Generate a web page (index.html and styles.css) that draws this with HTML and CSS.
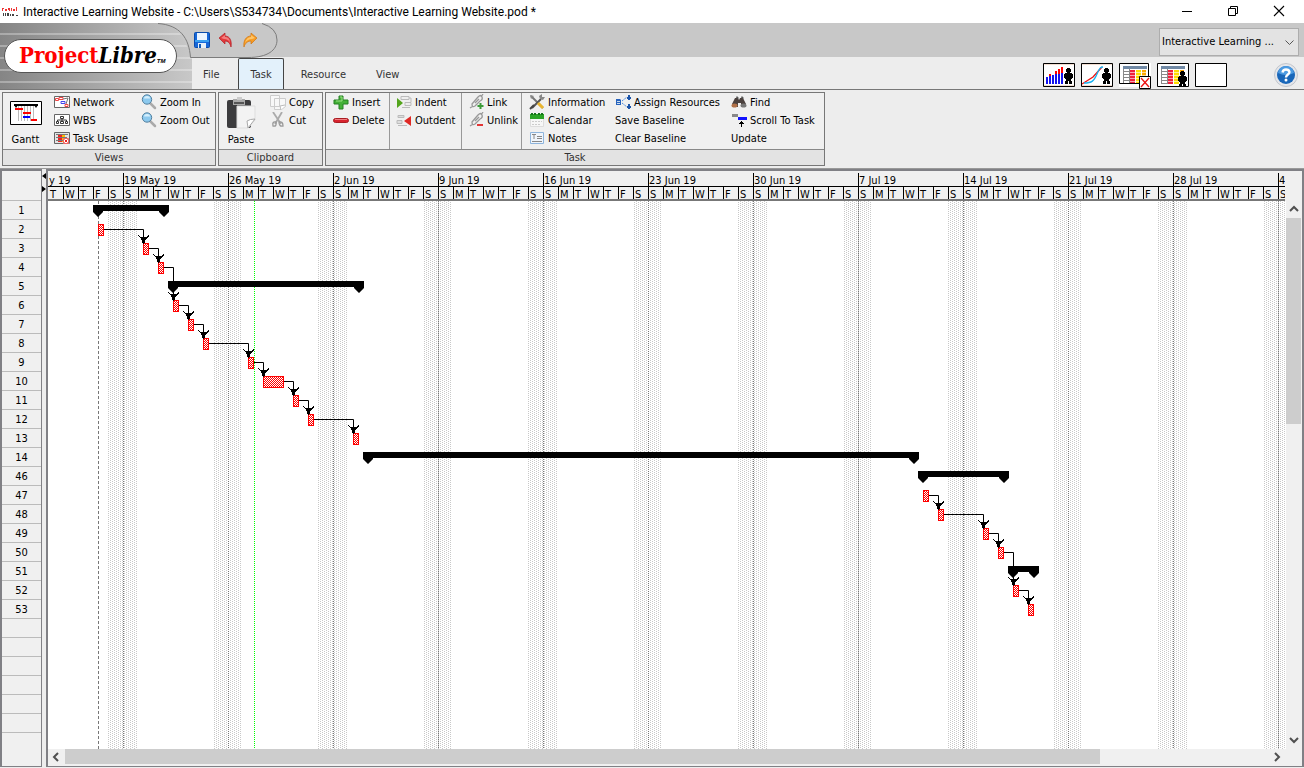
FILE: index.html
```html
<!DOCTYPE html>
<html lang="en">
<head>
<meta charset="utf-8">
<title>Interactive Learning Website - ProjectLibre</title>
<link rel="stylesheet" href="styles.css">
</head>
<body>
<header class="titlebar">
  <svg class="app-icon" width="16" height="10" viewBox="0 0 16 10"><path d="M0 1h2v1h-1v2h-1zM3 2h2v2h-2zM6 1h2v3h-1v-1h-1zM9 1h1v3h-1zM11 2h2v2h-2zM14 0h1v4h-1z" fill="#e33"/><path d="M1 6h1v3h-1zM3 6h1v3h-1zM5 6h2v3h-2zM8 7h1v2h-1zM10 7h2v2h-2zM14 8h2v1h-2z" fill="#444"/></svg>
  <span class="window-title">Interactive Learning Website - C:\Users\S534734\Documents\Interactive Learning Website.pod *</span>
  <div class="window-controls">
    <button type="button" aria-label="Minimize"><svg width="12" height="12"><path d="M1 6.500h10" stroke="#000"/></svg></button>
    <button type="button" aria-label="Restore"><svg width="12" height="12" fill="none" stroke="#000"><path d="M1.500 3.500h7v7h-7zM3.500 3.500v-2h7v7h-2"/></svg></button>
    <button type="button" aria-label="Close"><svg width="12" height="12"><path d="M1 1l10 10M11 1L1 11" stroke="#000" stroke-width="1.100"/></svg></button>
  </div>
</header>

<section class="banner">
  <div class="brand"><div class="logo"><span class="logo-red">Project</span><i>Libre</i><small>TM</small></div></div>
  <div class="banner-main">
    <div class="quickbar">
      <svg class="swoosh" width="124" height="35" viewBox="0 0 124 35"><path d="M0 0H4Q30 2 36 34.500H94C116 34.500 124 24 124 14Q123 4 108 0" fill="#c8c8c8"/><path d="M4 .5C26 2 35 15 36.500 34.500H94C114 34.500 123 27 123 17Q123 5 108 .5" fill="none" stroke="#7c7c7c"/></svg>
      <div class="quick-actions">
        <button type="button" aria-label="Save"><svg width="16" height="16"><rect x=".5" y=".5" width="15" height="15" rx="1" fill="#1767d8" stroke="#0a4cab"/><path d="M3 1h10v7H3z" fill="#eaf4ff"/><path d="M1 8h14v2H1z" fill="#38a0f0"/><path d="M4 11h8v5H4z" fill="#e8f1f8"/><path d="M5 12h2v4H5z" fill="#125bb7"/></svg></button>
        <button type="button" aria-label="Undo"><svg width="16" height="16"><path d="M1 6L7 1v3c5 0 7 5 6 11-1-4-3-6-6-6v3z" fill="#e2383b" stroke="#b12025" stroke-width=".7"/><path d="M3 6l4-3v2c3 0 5 2 5 6-1-3-3-4-6-4z" fill="#f47e7e"/></svg></button>
        <button type="button" aria-label="Redo"><svg width="16" height="16"><path d="M15 6L9 1v3C4 4 1 9 2 15c1-4 4-6 7-6v3z" fill="#f79c24" stroke="#ce7412" stroke-width=".7"/><path d="M13 6L9 3v2C6 5 4 7 3 11c2-3 4-4 7-4z" fill="#ffc567"/></svg></button>
      </div>
      <label class="project-picker"><select aria-label="Open project"><option>Interactive Learning ...</option></select><svg width="9" height="6"><path d="M.5.5l4 4 4-4" fill="none" stroke="#555"/></svg></label>
    </div>
    <div class="tabrow">
      <nav class="tabs"><button type="button">File</button><button type="button" class="active">Task</button><button type="button">Resource</button><button type="button">View</button></nav>
      <div class="view-buttons">
        <button type="button" aria-label="Histogram"><svg width="32" height="24"><path d="M0 0h32v2H0zM0 22h32v2H0z" fill="#f1ddd0"/><path d="M3 14h2v7H3zM6 12h2v9H6zM9 12h2v9H9zM12 10h2v11h-2zM15 10h2v11h-2zM18 10h2v11h-2z" fill="#1414f0"/><path d="M6 11h2v2H6zM12 8h2v3h-2zM15 6h2v5h-2zM18 4h2v6h-2z" fill="#f00"/><use href="#person" x="21" y="5"/><path d="M.5.5h31v23H.5z" fill="none" stroke="#000"/></svg></button>
        <button type="button" aria-label="Charts"><svg width="32" height="24"><path d="M0 0h32v2H0zM0 22h32v2H0z" fill="#f1ddd0"/><path d="M1 21L12 14 21 4" fill="none" stroke="#e11" stroke-width="1.300"/><path d="M3 20c8 0 10-2 13-9s4-7 6-7" fill="none" stroke="#16b1f0" stroke-width="1.300"/><use href="#person" x="21" y="5"/><path d="M.5.5h31v23H.5z" fill="none" stroke="#000"/></svg></button>
        <button type="button" aria-label="Task usage"><svg width="34" height="27"><use href="#sheet"/><path d="M.5.5h29v20H.5z" fill="none" stroke="#000"/><path d="M20.500 13.500h11v12h-11z" fill="#fff" stroke="#000"/><path d="M22 15l8 9M30 15l-8 9" stroke="#e11" stroke-width="1.300"/></svg></button>
        <button type="button" aria-label="Resource usage"><svg width="32" height="24"><use href="#sheet"/><use href="#person" x="21" y="8"/><path d="M.5.5h31v23H.5z" fill="none" stroke="#000"/></svg></button>
        <button type="button" aria-label="No sub-view"><svg width="32" height="24"><path d="M.5.5h31v23H.5z" fill="#fff" stroke="#000"/></svg></button>
        <button type="button" class="help" aria-label="Help"><svg width="24" height="24"><circle cx="12" cy="12" r="11.500" fill="#e4e6ea" stroke="#c3c6cc"/><circle cx="12" cy="12" r="9" fill="#1866b9"/><path d="M4 10a8 7 0 0 1 16 0Q12 14 4 10z" fill="#4c9be2"/><path d="M8.500 9.500Q9 6.500 12 6.500t3.500 2.500c0 2.500-3.500 2.500-3.500 5.500" fill="none" stroke="#fff" stroke-width="2.400"/><circle cx="12" cy="17" r="1.500" fill="#fff"/></svg></button>
      </div>
    </div>
  </div>
</section>

<svg class="defs" width="0" height="0" aria-hidden="true"><defs>
  <g id="person"><path d="M3 0h3v1h1v3h-1v1h2v1h1v4h-1v1h-1v2h1v3h-3v-3h-1v3h-3v-3h1v-2h-1v-1h-1v-4h1v-1h2v-1h-1v-3h1z"/></g>
  <g id="sheet"><path d="M4 3h24v18H4z" fill="#fff"/><path d="M4.500 6v14.500M10.500 6v15M4 8.500h6M4 11.500h6M4 14.500h6M4 17.500h6M4 20.500h6" stroke="#888"/><path d="M4 3h24v3H4z" fill="#7089a5"/><path d="M11 7h5v14h-5z" fill="#f0203c"/><path d="M17 7h5v14h-5z" fill="#fd0"/><path d="M23 7h4v14h-4z" fill="#ffa800"/><path d="M11 9.500h16M11 12.500h16M11 15.500h16M11 18.500h16" stroke="#fff" stroke-opacity=".6"/></g>
  <g id="lens"><path d="M9 9l5 5" stroke="#aaa" stroke-width="2.500" stroke-linecap="round"/><circle cx="6" cy="5.500" r="4.700" fill="#8cc9ee" stroke="#527f9e"/><path d="M3 4.500a3 2.500 0 0 1 6 0z" fill="#d5effc"/></g>
  <g id="chain" fill="none" stroke="#999" stroke-width="1.300"><path d="M3 10l6-7q3-3 4 0T11 7L6 12q-3 2-3-2zM6 9l4-4M1 14l3-2M12 3l2-3"/></g>
</defs></svg>

<section class="ribbon">
  <div class="group views">
    <div class="group-body">
      <button type="button" class="big"><svg width="32" height="24"><path d="M.5.500h31v23H.5z" fill="#fff" stroke="#000"/><path d="M8.500 5v15M11.500 5v15M14.500 5v15M17.500 5v15M20.500 5v15M23.500 5v15" stroke="#bbb"/><path d="M4 3h24v2H4z"/><path d="M4 4h4l-2 3zM24 4h4l-2 3z"/><path d="M5 7h8v2H5zM13 11h8v2h-8zM21 18h6v2h-6z" fill="#f00"/><path d="M13 15h7v2h-7z" fill="#00f"/></svg><span>Gantt</span></button>
      <div class="col">
        <button type="button"><svg width="16" height="16"><path d="M.5 2.500h15v11H.5z" fill="#fff" stroke="#666"/><path d="M1.500 4.500h3v2h-3zM5 3.500h4v2H5zM11 10.500h3v2h-3z" fill="#fff" stroke="#e44"/><path d="M7 7.500h4v2H7z" fill="#fff" stroke="#44e"/><path d="M9 5l5-1-2 6" fill="none" stroke="#777"/></svg>Network</button>
        <button type="button"><svg width="16" height="16"><path d="M.5 2.500h15v11H.5z" fill="#fff" stroke="#666"/><path d="M6.500 4.500h3v2h-3zM2.500 9.500h2v2h-2zM6.500 9.500h3v2h-3zM11.500 9.500h2v2h-2zM8 7v2M3.500 9V8h9v1" fill="none" stroke="#333"/></svg>WBS</button>
        <button type="button"><svg width="16" height="16"><path d="M.5 2.500h15v11H.5z" fill="#e4e4e4" stroke="#666"/><path d="M2 4h12v1H2z" fill="#777"/><path d="M4 5h4v7H4z" fill="#e22"/><path d="M8 5h3v7H8z" fill="#fb0"/><path d="M2 7.500h11M2 10.500h7" stroke="#777"/><path d="M9.500 8.500h5v5h-5z" fill="#fff" stroke="#e66"/><path d="M10.500 9.500l3 3m0-3l-3 3" stroke="#e22"/></svg>Task Usage</button>
      </div>
      <div class="col">
        <button type="button"><svg width="16" height="16"><use href="#lens"/></svg>Zoom In</button>
        <button type="button"><svg width="16" height="16"><use href="#lens"/></svg>Zoom Out</button>
      </div>
    </div>
    <h2>Views</h2>
  </div>
  <div class="group clipboard">
    <div class="group-body">
      <button type="button" class="big"><svg width="30" height="33"><rect x="1" y="3" width="24" height="28" rx="2" fill="#3c3c3e"/><path d="M7 2h12v6H7z" fill="#aaa"/><path d="M11 0h5v3h-5z" fill="#ccc"/><path d="M8 5h10v2H8z" fill="#555"/><path d="M11 9h18v14l-7 8H11z" fill="#f3f3f3" stroke="#ddd"/><path d="M29 22q-5 0-8 2l1 7z" fill="#fff" stroke="#aaa"/></svg><span>Paste</span></button>
      <div class="col">
        <button type="button"><svg width="16" height="16"><path d="M.5 1.500h9v11h-9zM4.500 4.500h11v8l-4 3h-7z" fill="#f8f8f8" stroke="#ccc"/><path d="M15 11l-5 1 1 4" fill="#fff" stroke="#bbb"/></svg>Copy</button>
        <button type="button"><svg width="16" height="16"><path d="M3 0l8 12M12 0L5 12" stroke="#aaa" stroke-width="1.800"/><path d="M6 10q-4-1-3 4 4 1 3-4zM9 10q4-1 4 4-4 1-4-4z" fill="none" stroke="#999" stroke-width="1.300"/></svg>Cut</button>
      </div>
    </div>
    <h2>Clipboard</h2>
  </div>
  <div class="group tasks">
    <div class="group-body">
      <div class="col">
        <button type="button"><svg width="16" height="16"><path d="M6 2h4v4h5v4h-5v5H6v-5H1V6h5z" fill="#44b137" stroke="#248022" stroke-linejoin="round"/><path d="M7 3h2v4H3" fill="none" stroke="#9ae184"/></svg>Insert</button>
        <button type="button"><svg width="16" height="16"><rect x=".5" y="6.500" width="15" height="4" rx="2" fill="#d8232e" stroke="#a91d22"/><path d="M2 7.500h12" stroke="#f07c80"/></svg>Delete</button>
      </div>
      <div class="col">
        <button type="button"><svg width="16" height="16"><path d="M5 2.500h8v3H5zM9 8.500h6v3H9zM6 13.500h8M13 4h2v4" fill="#eee" stroke="#bbb"/><path d="M1 4l6 5-6 5z" fill="#54a51d"/></svg>Indent</button>
        <button type="button"><svg width="16" height="16"><path d="M2 3.500h6v2H2zM1 8.500h5v3H1zM2 13.500h9" fill="#ddd" stroke="#bbb"/><path d="M15 4v10L8 9z" fill="#df2925"/></svg>Outdent</button>
      </div>
      <div class="col">
        <button type="button"><svg width="16" height="16"><use href="#chain"/><path d="M11.500 9v6M8.500 12h6" stroke="#3b9a38" stroke-width="2"/></svg>Link</button>
        <button type="button"><svg width="16" height="16"><use href="#chain"/><path d="M8 13h6" stroke="#e23535" stroke-width="2"/></svg>Unlink</button>
      </div>
      <div class="col">
        <button type="button"><svg width="16" height="16"><path d="M2 2l12 12" stroke="#777" stroke-width="2"/><path d="M1 1l4 1-3 3z" fill="#888"/><path d="M3 14l9-9" stroke="#555" stroke-width="2"/><path d="M11 5l-1-3 3-2v3l3 0-2 3z" fill="#888"/><path d="M9 9l5 5" stroke="#eab52e" stroke-width="3"/><path d="M1 15l4-4" stroke="#444" stroke-width="2"/></svg>Information</button>
        <button type="button"><svg width="16" height="16"><path d="M1.500 3.500h13v11h-13z" fill="#f7f7f7" stroke="#ddd"/><path d="M1 2h14v5H1z" fill="#2ba526"/><path d="M2 1h2v2H2zM5 1h2v2H5zM9 1h2v2H9zM12 1h2v2h-2z" fill="#15751b"/><path d="M3 9.500h10M3 12.500h8" stroke="#ccc" stroke-dasharray="2 1"/></svg>Calendar</button>
        <button type="button"><svg width="16" height="16"><path d="M1.500 2.500h13v11h-13z" fill="#eff5fc" stroke="#8eb5dd"/><path d="M3 4.500h4M5 4v5M8 6.500h5M8 8.500h5M3 11.500h10" stroke="#888"/></svg>Notes</button>
      </div>
      <div class="col">
        <button type="button"><svg width="16" height="16"><path d="M1 5h4l1 1v5H1z" fill="#2863bd"/><path d="M2 7.500h3M2 9.500h3" stroke="#cde"/><path d="M7 7l5-4M7 9l5 4" stroke="#4c8add" stroke-dasharray="2 1" fill="none"/><path d="M12 3h4v2h-4zM12 12h4v2h-4zM13 1h2v5h-2zM13 10h2v5h-2z" fill="#1d55aa"/></svg>Assign Resources</button>
        <button type="button">Save Baseline</button>
        <button type="button">Clear Baseline</button>
      </div>
      <div class="col">
        <button type="button"><svg width="16" height="16"><path d="M4 4h3l1 2 1-2h3l3 6v3h-5V9H7v4H1v-3z" fill="#4b413e"/><ellipse cx="3.500" cy="11.500" rx="3" ry="2" fill="#b17148"/><ellipse cx="12.500" cy="11.500" rx="3" ry="2" fill="#777"/><path d="M5 3h2v2M10 3h2v2" stroke="#777"/></svg>Find</button>
        <button type="button"><svg width="16" height="16"><path d="M1 2h6v3H1z" fill="#888"/><path d="M7 5h9v3H7z" fill="#11f"/><path d="M10.500 9v6M8 11.500h5M9 10.500h3" stroke="#000"/></svg>Scroll To Task</button>
        <button type="button">Update</button>
      </div>
    </div>
    <h2>Task</h2>
  </div>
</section>

<main class="workspace">
  <div class="row-panel">
    <div class="corner"></div>
    <ol class="row-numbers" id="row-numbers"></ol>
  </div>
  <div class="splitter"><svg width="4" height="22"><path d="M4 1v6L0 4zM0 14v6l4-3z"/></svg></div>
  <div class="gantt">
    <div class="gantt-main">
      <div class="timescale" id="timescale"></div>
      <svg class="chart" id="chart" role="img" aria-label="Gantt chart"></svg>
      <div class="hscroll"><svg width="17" height="16"><path d="M10 4L6 8l4 4" fill="none" stroke="#505050" stroke-width="2"/></svg><div class="htrack"><div class="hthumb"></div></div><svg width="17" height="16"><path d="M6 4l4 4-4 4" fill="none" stroke="#505050" stroke-width="2"/></svg></div>
    </div>
    <div class="vscroll"><svg width="15" height="17"><path d="M4 10l4-4 4 4" fill="none" stroke="#505050" stroke-width="2"/></svg><div class="vtrack"><div class="vthumb"></div></div><svg width="15" height="17"><path d="M4 6l4 4 4-4" fill="none" stroke="#505050" stroke-width="2"/></svg></div>
  </div>
</main>
<script src="gantt.js"></script>
</body>
</html>
```
FILE: styles.css
```css
* { box-sizing: border-box; }
body {
  margin: 0; height: 100vh; display: flex; flex-direction: column; overflow: hidden;
  background: #ededed; color: #000;
  font: 11px/18px "DejaVu Sans Condensed", "Noto Sans", sans-serif;
}
button { font: inherit; color: inherit; background: none; border: 0; padding: 0; white-space: nowrap; }
svg { display: block; flex: none; }
.defs { position: absolute; }

.titlebar { display: flex; align-items: center; height: 23px; flex: none; background: #fff; padding: 0 2px; }
.window-title { margin-left: 5px; font: 12px/22px Roboto, "Noto Sans", sans-serif; }
.window-controls { margin-left: auto; display: flex; padding-bottom: 2px; }
.window-controls button { width: 46px; display: flex; justify-content: center; }

.banner { display: flex; height: 67px; flex: none; border-bottom: 1px solid #777; }
.brand {
  width: 192px; flex: none; padding: 16px 0 0 4px;
  background:
    repeating-linear-gradient(transparent 0 10px, rgba(255,255,255,.3) 10px 12px),
    linear-gradient(90deg, #858585, #c8c8c8);
}
.logo {
  width: 173px; height: 34px; border: 1px solid #555; border-radius: 17px; background: #fff;
  padding-left: 14px; font: bold 22px/30px "DejaVu Serif Condensed", "Liberation Serif", serif; white-space: nowrap;
}
.logo-red { color: #f00; }
.logo small { font: italic bold 6px/6px "Liberation Sans", sans-serif; }
.banner-main { flex: 1; min-width: 0; display: flex; flex-direction: column; }
.quickbar { position: relative; height: 34px; background: #c8c8c8; display: flex; align-items: center; justify-content: space-between; padding-right: 5px; }
.swoosh { position: absolute; left: -38px; top: 0; }
.quick-actions { position: relative; display: flex; gap: 8px; padding-left: 2px; }
.project-picker { position: relative; display: flex; align-items: center; }
.project-picker select {
  appearance: none; width: 140px; height: 28px; margin-top: 4px; border: 1px solid #adadad; border-radius: 0; background: #e3e3e3;
  padding: 0 0 0 2px; font: inherit; color: #000;
}
.project-picker svg { position: absolute; right: 5px; bottom: 10px; }
.tabrow { flex: 1; display: flex; justify-content: space-between; padding-right: 6px; }
.tabs { display: flex; padding-top: 1px; color: #333; }
.tabs button { padding: 2px 14px 0; border: 1px solid transparent; border-bottom: 0; border-radius: 2px 2px 0 0; }
.tabs button:first-child { padding: 2px 18px 0 10px; }
.tabs button:nth-child(3) { padding-left: 16px; }
.tabs .active { padding: 2px 11px 0; background: #e3f1fb; border-color: #444; }
.view-buttons { display: flex; gap: 6px; align-items: flex-start; padding-top: 6px; }
.view-buttons button { width: 32px; height: 24px; background: #fff; }
.view-buttons .help { width: 24px; margin-left: 41px; background: none; }

.ribbon { display: flex; gap: 2px; height: 79px; flex: none; padding: 2px 2px; border-bottom: 1px solid #999; }
.group { display: flex; flex-direction: column; border: 1px solid #777; background: #f0f0f0; }
.group-body { flex: 1; min-height: 0; display: flex; }
.group h2 { margin: 0; height: 16px; flex: none; border-top: 1px solid #888; background: #e3e3e3; color: #333; font: 11px/16px "DejaVu Sans Condensed", "Noto Sans", sans-serif; text-align: center; }
.col { display: flex; flex-direction: column; }
.col button { display: flex; align-items: center; gap: 3px; height: 18px; padding-top: 1px; }
.col button svg { margin-top: -1px; }
.big { display: flex; flex-direction: column; align-items: center; justify-content: space-between; padding-top: 8px; }
.views { width: 214px; }
.views .big { width: 45px; margin-right: 6px; }
.views .col:nth-child(2) { width: 87px; }
.clipboard { width: 105px; }
.clipboard .big { width: 44px; padding-top: 4px; margin-right: 7px; }
.tasks { width: 500px; }
.tasks .col { padding-left: 7px; border-left: 1px solid #999; height: 56px; }
.tasks .col:nth-child(1) { width: 63px; border: 0; }
.tasks .col:nth-child(2) { width: 72px; padding-left: 6px; }
.tasks .col:nth-child(3) { width: 60px; }
.tasks .col:nth-child(3) button { gap: 2px; }
.tasks .col:nth-child(4) { width: 94px; }
.tasks .col:nth-child(5) { width: 116px; padding-left: 0; border: 0; }
.tasks .col:nth-child(6) { padding-left: 0; border: 0; }

.workspace { flex: 1; min-height: 0; display: flex; background: #ededed; padding-bottom: 1px; }
.row-panel { width: 42px; flex: none; display: flex; flex-direction: column; border: 2px solid #808085; border-right-width: 1px; border-bottom-width: 1px; background: #f0f0f0; overflow: hidden; }
.corner { height: 30px; flex: none; border-bottom: 1px solid #bbb; }
.row-numbers { list-style: none; margin: 0; padding: 0; text-align: center; }
.row-numbers li { height: 19px; padding-top: 1px; border-bottom: 1px solid #bbb; }
.splitter { width: 4px; flex: none; padding-top: 3px; }
.gantt { flex: 1; min-width: 0; display: flex; border: 2px solid #808085; border-bottom-width: 1px; background: #f0f0f0; }
.gantt-main { flex: 1; min-width: 0; display: flex; flex-direction: column; }
.timescale { display: flex; height: 30px; flex: none; border-bottom: 2px solid #777; overflow: hidden; padding-top: 2px; margin-right: 1px; }
.week { flex: none; border-left: 1px solid #000; }
.week:first-child { border-left-color: transparent; }
.week-name { height: 14px; line-height: 15px; border-bottom: 1px solid #000; padding-left: 1px; margin-left: -1px; white-space: nowrap; }
.days { display: flex; margin-left: -1px; }
.days span { width: 15px; height: 14px; line-height: 15px; border-left: 1px solid #000; padding-left: 1px; }
.week:first-child .days span:first-child { border-left-color: transparent; }
.chart { flex: 1; min-height: 0; width: 100%; background: #fff; }
.hscroll { display: flex; height: 17px; flex: none; }
.htrack { flex: 1; }
.hthumb { width: 86%; height: 15px; background: #cdcdcd; }
.vscroll { width: 16px; flex: none; display: flex; flex-direction: column; padding: 30px 0 17px; }
.vtrack { flex: 1; }
.vthumb { height: 40%; width: 15px; background: #cdcdcd; }
```
FILE: gantt.js
```js
const DAY = 15;
const WEEK = DAY * 7;
const ROW = 19;
const FIRST_WEEK = -30;

// label and visible days; the first and the last week are scrolled partly out of view
const weeks = [["y 19", "TWTFS"], ["19 May 19"], ["26 May 19"], ["2 Jun 19"], ["9 Jun 19"], ["16 Jun 19"], ["23 Jun 19"],
  ["30 Jun 19"], ["7 Jul 19"], ["14 Jul 19"], ["21 Jul 19"], ["28 Jul 19"], ["4", "S"]];

// id, kind, start x, end x, predecessor id
const rows = [
  [1, "summary", 45, 121], [2, "task", 50, 56], [3, "task", 95, 101, 2], [4, "task", 110, 116, 3],
  [5, "summary", 120, 316], [6, "task", 125, 131, 4], [7, "task", 140, 146, 6], [8, "task", 155, 161, 7],
  [9, "task", 200, 206, 8], [10, "task", 215, 236, 9], [11, "task", 245, 251, 10], [12, "task", 260, 266, 11],
  [13, "task", 305, 311, 12], [14, "summary", 315, 871], [46, "summary", 870, 961], [47, "task", 875, 881],
  [48, "task", 890, 896, 47], [49, "task", 935, 941, 48], [50, "task", 950, 956, 49],
  [51, "summary", 960, 991], [52, "task", 965, 971, 50], [53, "task", 980, 986, 52]
];

document.getElementById("timescale").innerHTML = weeks.map(([name, days = "SMTWTFS"]) =>
  `<div class="week" style="width:${days.length * DAY}px"><div class="week-name">${name}</div><div class="days">${
    [...days].map(d => `<span>${d}</span>`).join("")}</div></div>`).join("");

const numbers = rows.map(r => r[0]).concat(Array(6).fill(""));
document.getElementById("row-numbers").innerHTML = numbers.map(n => `<li>${n}</li>`).join("");

let svg = `<defs>
  <pattern id="weekend" width="4" height="4" patternUnits="userSpaceOnUse"><path d="M0 0h1v1h-1zM0 2h1v1h-1zM2 1h1v1h-1zM2 3h1v1h-1z" fill="#c8c8c8"/></pattern>
  <pattern id="critical" width="2" height="2" patternUnits="userSpaceOnUse"><path d="M0 0h1v1h-1zM1 1h1v1h-1z" fill="#f00"/></pattern>
</defs>`;

weeks.forEach((_, i) => {
  const x = FIRST_WEEK + i * WEEK;
  svg += `<rect x="${x - DAY}" y="0" width="${2 * DAY - 1}" height="100%" fill="url(#weekend)"/>
    <line x1="${x + .5}" x2="${x + .5}" y1="0" y2="100%" stroke="#777" stroke-dasharray="1 1"/>`;
});
svg += `<line x1="50.5" x2="50.5" y1="0" y2="100%" stroke="#777" stroke-dasharray="3 2"/>
  <line x1="206.5" x2="206.5" y1="0" y2="100%" stroke="#0f0" stroke-dasharray="1 1"/>`;

rows.forEach(([id, kind, x1, x2, pred], i) => {
  const y = i * ROW + 4;
  if (kind === "summary") {
    svg += `<path d="M${x1} ${y}H${x2}v7l-5 5-5-5v-1H${x1 + 10}v1l-5 5-5-5z"/>`;
    return;
  }
  svg += `<rect x="${x1}" y="${y}" width="${x2 - x1}" height="12" fill="#fff"/>
    <rect x="${x1}" y="${y}" width="${x2 - x1}" height="12" fill="url(#critical)"/>
    <rect x="${x1 + .5}" y="${y + .5}" width="${x2 - x1 - 1}" height="11" fill="none" stroke="#f00"/>`;
  if (pred) {
    const p = rows.findIndex(r => r[0] === pred);
    svg += `<path d="M${rows[p][3]} ${p * ROW + 9.5}H${x1 + .5}V${y}" fill="none" stroke="#000"/>
      <path d="M${x1 - 5} ${y - 8}l3 2h5l3-2v1l-3 3-2 5h-1l-2-5-3-3z" shape-rendering="crispEdges"/>`;
  }
});
document.getElementById("chart").innerHTML = svg;
```
